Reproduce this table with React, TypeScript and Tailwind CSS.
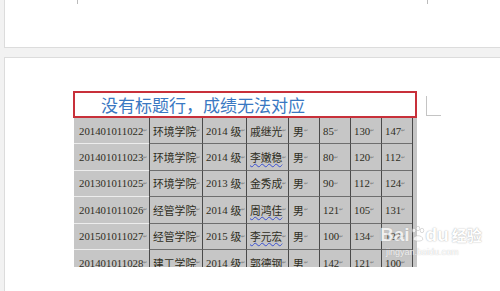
import React from "react";

const rows = [
  ["201401011022", "环境学院", "2014", "戚继光", "男", "85", "130", "147", false],
  ["201401011023", "环境学院", "2014", "李嫩稳", "男", "80", "120", "112", true],
  ["201301011025", "环境学院", "2013", "金秀成", "男", "90", "112", "124", false],
  ["201401011026", "经管学院", "2014", "周鸿佳", "男", "121", "105", "131", true],
  ["201501011027", "经管学院", "2015", "李元宏", "男", "100", "134", "122", true],
  ["201401011028", "建工学院", "2014", "郭德钢", "男", "142", "121", "100", false],
] as const;

const cjk = { fontFamily: '"Noto Sans CJK SC", serif' };

const Mark = () => <span className="text-[5px] leading-none text-[#777]">↵</span>;

const Cell = ({
  children,
  first,
}: {
  children?: React.ReactNode;
  first?: boolean;
}) => (
  <div
    className={
      "flex items-center whitespace-nowrap border-b " +
      (first
        ? "border-b-[#ededed] pl-[5px]"
        : "border-b-[#6e6e6e] border-l border-l-[#4a4a4a] pl-[3px]")
    }
  >
    {children}
  </div>
);

const App = () => {
  return (
    <div
      className="relative h-[291px] w-[500px] overflow-hidden bg-[#f2f2f2]"
      style={{ fontFamily: '"Liberation Serif", "Noto Sans CJK SC", serif' }}
    >
      {/* previous page */}
      <div className="relative ml-[4px] h-[48px] border-b border-l border-[#dcdcdc] bg-white">
        <div className="absolute left-[72px] top-0 h-[4px] w-0 border-r border-[#bbb]" />
        <div className="absolute left-[422px] top-0 h-[4px] w-0 border-r border-[#bbb]" />
      </div>

      {/* current page */}
      <div className="ml-[4px] mt-[9px] h-[240px] border-l border-t border-[#dcdcdc] bg-white">
        <div className="flex pl-[68px] pt-[33px]">
          <div className="flex h-[27px] w-[344px] items-center border-2 border-[#c8303a] pl-[26px]">
            <span
              className="text-[17px] leading-none text-[#3a78c2]"
              style={{ fontFamily: '"Noto Sans CJK SC", sans-serif' }}
            >
              没有标题行，成绩无法对应
            </span>
          </div>
          <div className="ml-[9px] mt-[5px] h-[20px] w-[15px] border-b border-l border-[#c4c4c4]" />
        </div>

        <div className="ml-[69px] h-[149px] w-[343px] overflow-hidden">
          {rows.map((r, i) => (
            <div
              key={i}
              className="grid h-[26.4px] grid-cols-[75px_53px_44px_42px_31px_31px_31px_31px_5px] bg-[#c6c6c6] text-[10.8px] text-[#2e2d22]"
            >
              <Cell first>
                {r[0]}
                <Mark />
              </Cell>
              <Cell>
                <span style={cjk}>{r[1]}</span>
                <Mark />
              </Cell>
              <Cell>
                {r[2]}
                <span className="ml-[3px]" style={cjk}>
                  级
                </span>
                <Mark />
              </Cell>
              <Cell>
                <span
                  className={r[8] ? "underline decoration-[#3a4fd0] decoration-wavy decoration-1" : ""}
                  style={cjk}
                >
                  {r[3]}
                </span>
                <Mark />
              </Cell>
              <Cell>
                <span className="ml-[1px]" style={cjk}>{r[4]}</span>
                <Mark />
              </Cell>
              <Cell>
                {r[5]}
                <Mark />
              </Cell>
              <Cell>
                {r[6]}
                <Mark />
              </Cell>
              <Cell>
                {r[7]}
                <Mark />
              </Cell>
              <div className="border-l border-l-[#4a4a4a]" />
            </div>
          ))}
        </div>
      </div>

      {/* watermark */}
      <div className="pointer-events-none absolute left-[380px] top-[225px] flex flex-col items-start opacity-75">
        <div
          className="flex items-center text-[19px] font-bold leading-none text-white"
          style={{
            fontFamily: '"Liberation Sans", sans-serif',
            textShadow: "0 0 1px #9a9a9a, 0 0 2px #c4c4c4",
          }}
        >
          <span>Bai</span>
          <svg width="16" height="19" viewBox="0 0 20 22">
            <g fill="white" stroke="#aaa" strokeWidth="0.7">
              <ellipse cx="5" cy="6" rx="2.2" ry="2.8" />
              <ellipse cx="10" cy="3.5" rx="2.2" ry="2.8" />
              <ellipse cx="15" cy="6" rx="2.2" ry="2.8" />
              <path d="M4 17 C4 11 16 11 16 17 C16 20 4 20 4 17 Z" />
            </g>
          </svg>
          <span>du</span>
          <span className="ml-[3px] text-[15px]" style={{ fontFamily: '"Noto Sans CJK SC", sans-serif' }}>
            经验
          </span>
        </div>
        <div
          className="ml-[6px] mt-[4px] text-[9px] leading-none text-white"
          style={{
            fontFamily: '"Liberation Sans", sans-serif',
            textShadow: "0 0 1px #a0a0a0",
          }}
        >
          jingyan.baidu.com
        </div>
      </div>
    </div>
  );
};

export default App;
